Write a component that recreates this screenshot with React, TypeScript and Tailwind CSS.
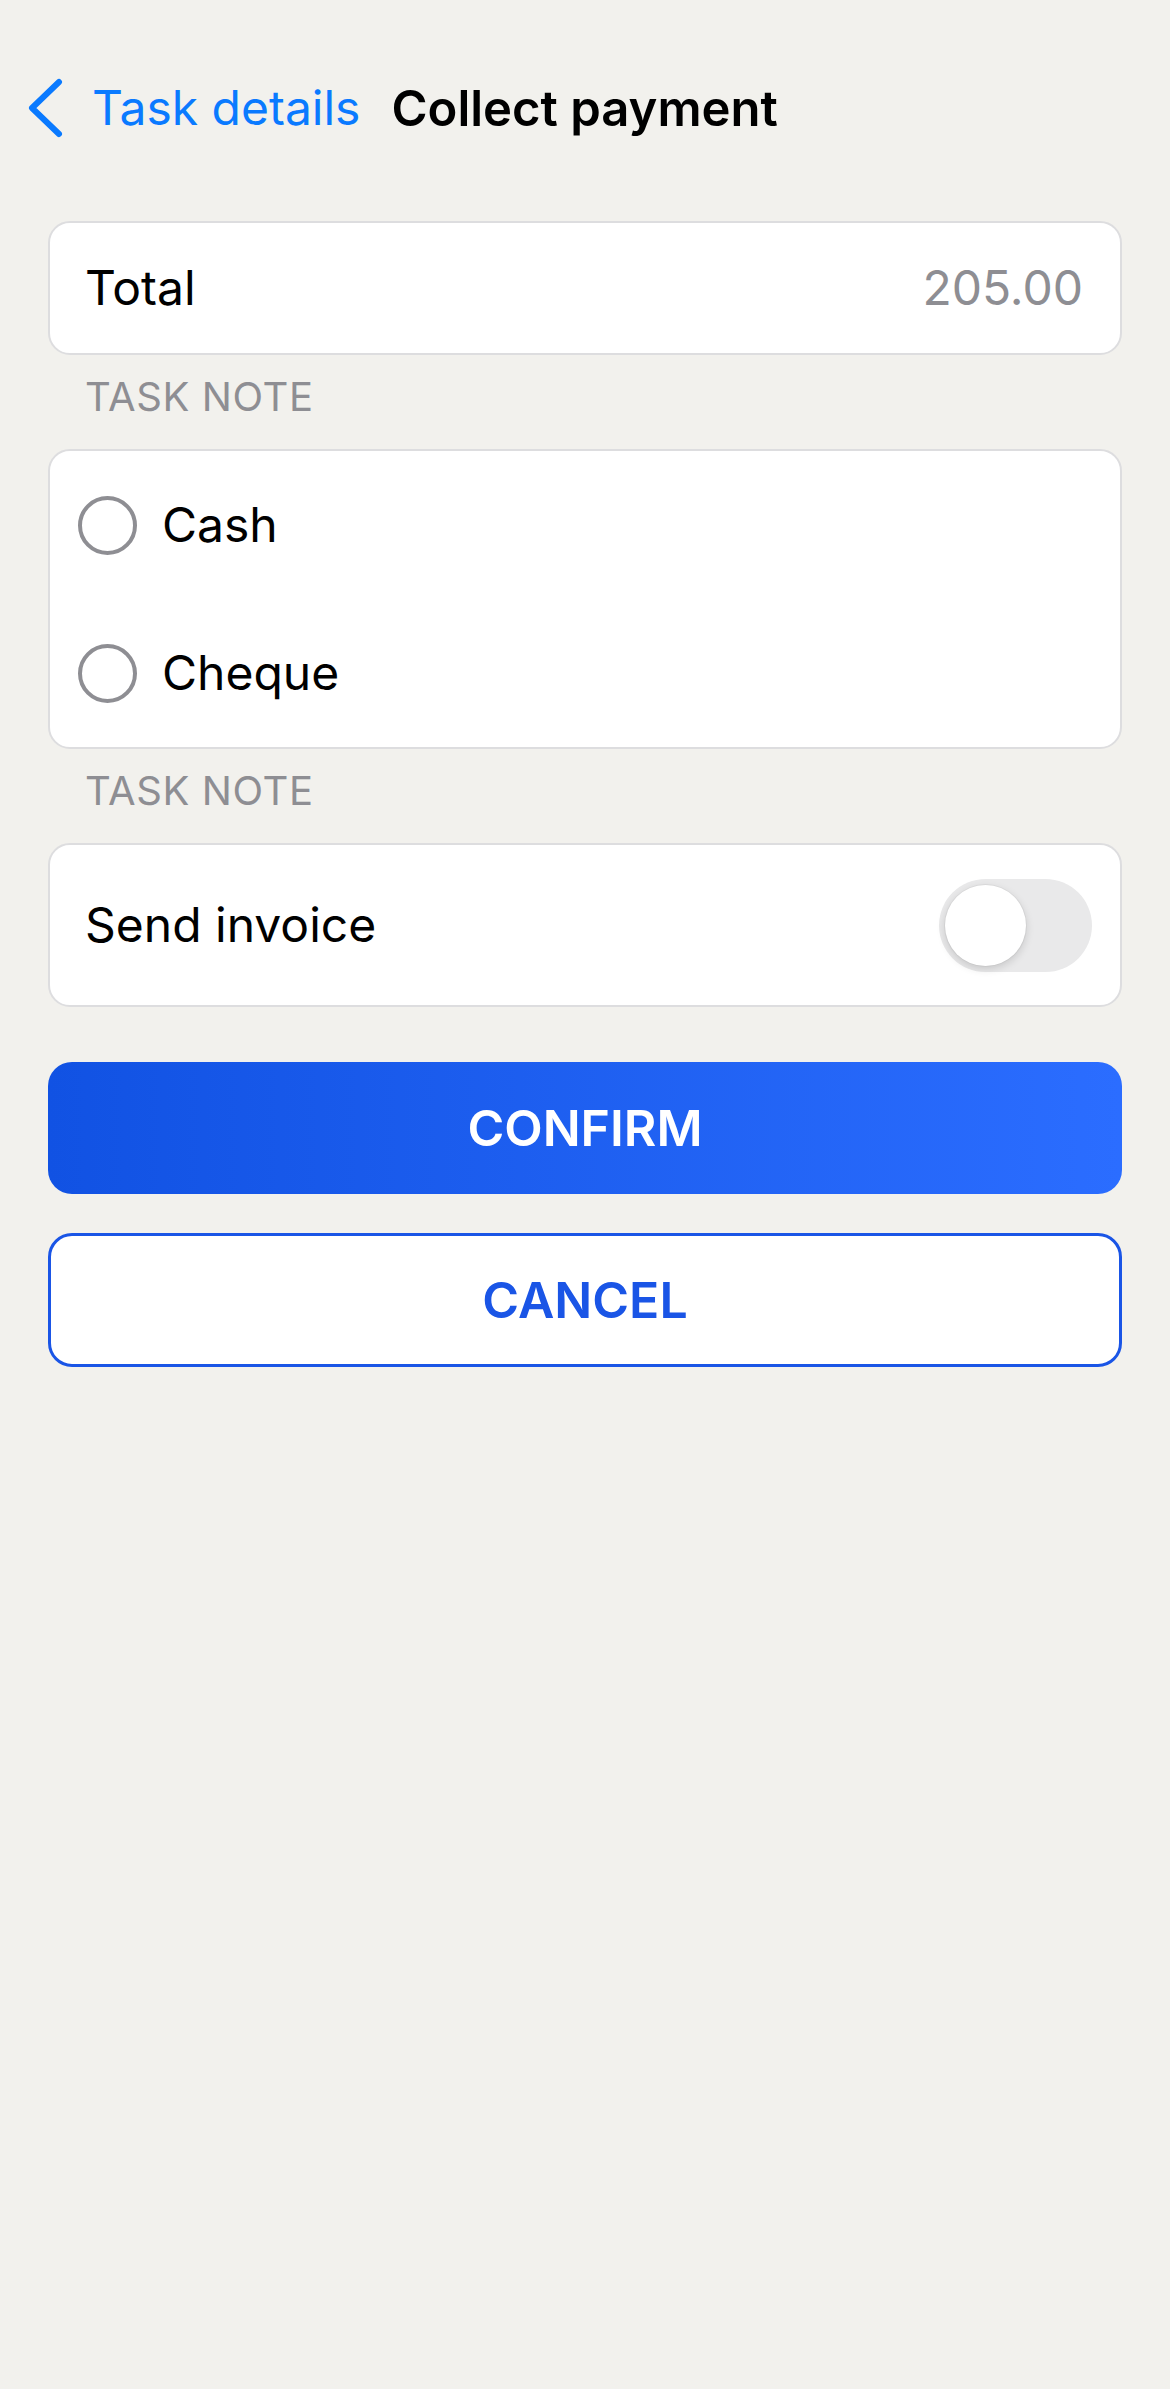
import { useState } from "react";

const labelCls =
  "h-[94px] pt-[18px] pl-[37px] text-[40px] leading-[47px] text-[#8e8e93] tracking-[0.6px]";

function Radio({ label, checked, onClick }: { label: string; checked: boolean; onClick: () => void }) {
  return (
    <button onClick={onClick} className="flex h-[148px] w-full items-center pl-[28px] text-left">
      <span
        className={
          checked
            ? "flex h-[59px] w-[59px] items-center justify-center rounded-full border-[4px] border-[#1a55e6]"
            : "flex h-[59px] w-[59px] items-center justify-center rounded-full border-[4px] border-[#8e8e93]"
        }
      >
        {checked && <span className="h-[31px] w-[31px] rounded-full bg-[#1a55e6]" />}
      </span>
      <span className="ml-[25px] text-[48px] leading-none text-black">{label}</span>
    </button>
  );
}

export default function App() {
  const [method, setMethod] = useState<string | null>(null);
  const [invoice, setInvoice] = useState(false);

  return (
    <div className="min-h-[2389px] w-full bg-[#f2f1ed] font-['Inter',sans-serif]">
      {/* Nav bar */}
      <div className="h-[221px] pt-[64px]">
        <div className="flex h-[88px] items-center">
          <svg width="38" height="60" viewBox="0 0 38 60" className="ml-[26px]" fill="none">
            <path d="M33 4 L6 30 L33 56" stroke="#0a7aff" strokeWidth="6" strokeLinecap="round" strokeLinejoin="round" />
          </svg>
          <span className="ml-[28px] text-[48px] leading-none text-[#0a7aff]">Task details</span>
          <span className="ml-[31px] text-[49px] font-semibold leading-none text-black">Collect payment</span>
        </div>
      </div>

      <div className="mx-[48px]">
        {/* Total */}
        <div className="flex h-[134px] items-center justify-between rounded-[22px] border-2 border-[#dddddf] bg-white pl-[35px] pr-[37px]">
          <span className="text-[48px] leading-none text-black">Total</span>
          <span className="text-[48px] leading-none text-[#8e8e93]">205.00</span>
        </div>

        <div className={labelCls}>TASK NOTE</div>

        {/* Payment method */}
        <div className="rounded-[22px] border-2 border-[#dddddf] bg-white">
          <Radio label="Cash" checked={method === "cash"} onClick={() => setMethod("cash")} />
          <Radio label="Cheque" checked={method === "cheque"} onClick={() => setMethod("cheque")} />
        </div>

        <div className={labelCls}>TASK NOTE</div>

        {/* Send invoice */}
        <div className="flex h-[164px] items-center justify-between rounded-[22px] border-2 border-[#dddddf] bg-white pl-[35px] pr-[28px]">
          <span className="text-[48px] leading-none text-black">Send invoice</span>
          <button
            onClick={() => setInvoice(!invoice)}
            className={
              invoice
                ? "flex h-[93px] w-[153px] items-center justify-end rounded-full bg-[#34c759] px-[6px]"
                : "flex h-[93px] w-[153px] items-center justify-start rounded-full bg-[#e9e9ea] px-[6px]"
            }
          >
            <span className="h-[81px] w-[81px] rounded-full bg-white shadow-[0_3px_8px_rgba(0,0,0,0.15),0_0_0_1px_rgba(0,0,0,0.04)]" />
          </button>
        </div>

        {/* Actions */}
        <button className="mt-[55px] flex h-[132px] w-full items-center justify-center rounded-[24px] bg-gradient-to-r from-[#1152e3] to-[#2b6dff] text-[50px] font-semibold text-white">
          CONFIRM
        </button>
        <button className="mt-[39px] flex h-[134px] w-full items-center justify-center rounded-[24px] border-[3px] border-[#1a55e6] bg-white text-[50px] font-semibold text-[#1a55e6]">
          CANCEL
        </button>
      </div>
    </div>
  );
}
